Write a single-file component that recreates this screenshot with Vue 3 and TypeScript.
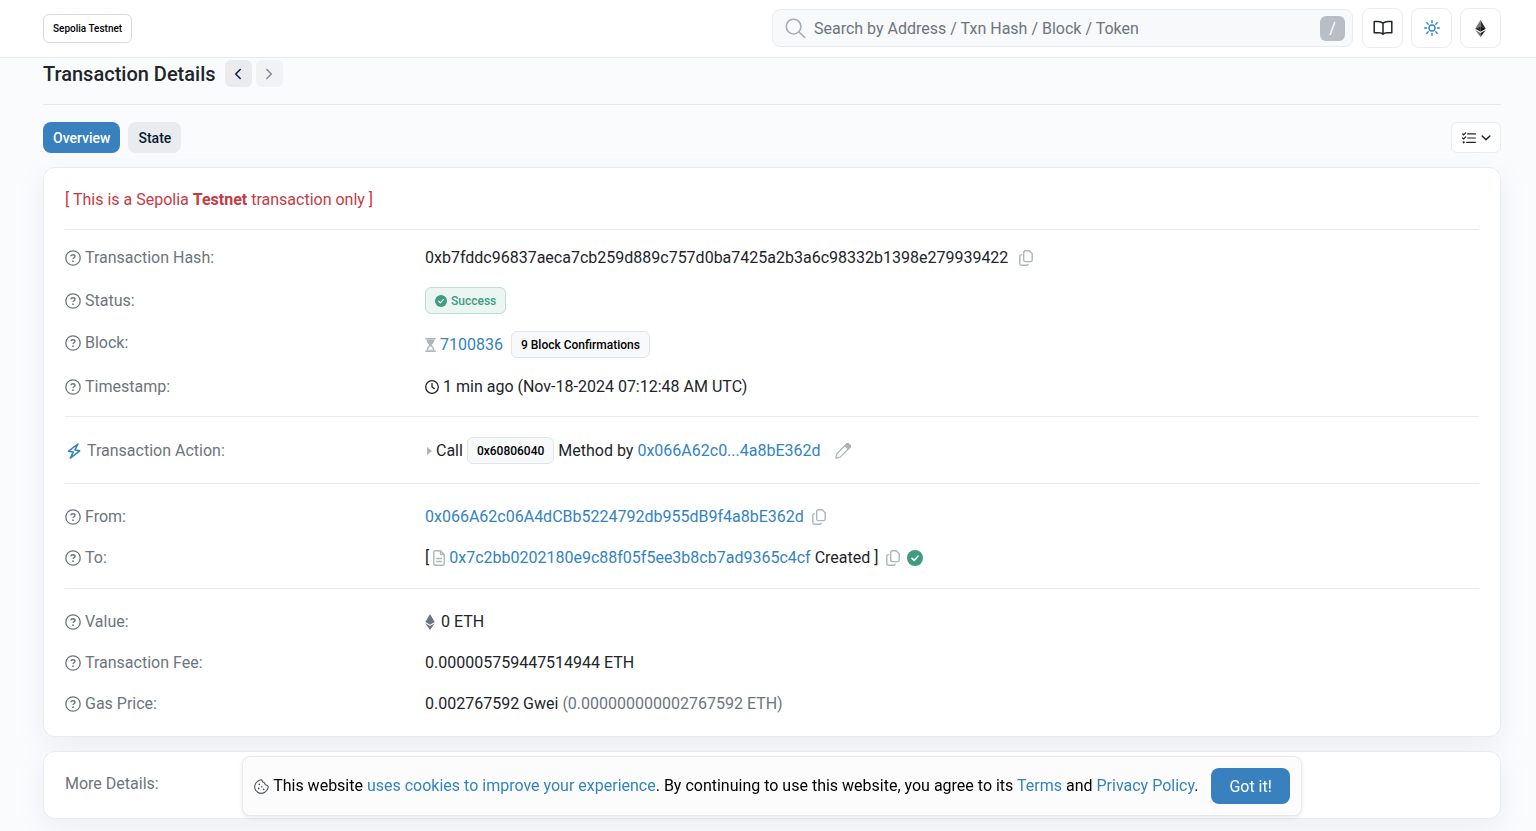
<script setup lang="ts">
import { ref } from 'vue'

const search = ref('')
const cookiesAccepted = ref(false)
const hash = '0xb7fddc96837aeca7cb259d889c757d0ba7425a2b3a6c98332b1398e279939422'
const sender = '0x066A62c06A4dCBb5224792db955dB9f4a8bE362d'
const contract = '0x7c2bb0202180e9c88f05f5ee3b8cb7ad9365c4cf'

function copy(text: string) {
  navigator.clipboard?.writeText(text)
}
</script>

<template>
  <svg class="defs" aria-hidden="true">
    <symbol id="i-help" viewBox="0 0 16 16">
      <circle cx="8" cy="8" r="7.2" fill="none" stroke="currentColor" stroke-width="1.3" />
      <path d="M6 6.3c0-1 .8-1.6 2-1.6s2 .7 2 1.7c0 1.3-2 1.4-2 2.6" fill="none" stroke="currentColor" stroke-width="1.4" />
      <circle cx="8" cy="11.2" r=".9" fill="currentColor" />
    </symbol>
    <symbol id="i-copy" viewBox="0 0 14 16">
      <path d="M6.400.8h3.900l2.900 2.900v6.200c0 1-.7 1.700-1.700 1.700H6.400c-1 0-1.700-.7-1.700-1.700V2.500c0-1 .7-1.700 1.700-1.700z" fill="none" stroke="currentColor" stroke-width="1.4" stroke-linejoin="round" />
      <path d="M2.900 4.600h-.4C1.500 4.600.8 5.300.8 6.300v7.200c0 1 .7 1.700 1.700 1.700h5c1 0 1.700-.6 1.700-1.500" fill="none" stroke="currentColor" stroke-width="1.4" />
    </symbol>
    <symbol id="i-check" viewBox="0 0 16 16">
      <circle cx="8" cy="8" r="8" fill="currentColor" />
      <path d="M4.900 8.200l2.200 2.200 4-4.300" fill="none" stroke="#fff" stroke-width="1.500" stroke-linecap="round" stroke-linejoin="round" />
    </symbol>
  </svg>

  <header class="topbar">
    <button class="network" type="button">Sepolia Testnet</button>
    <form class="search" role="search" @submit.prevent>
      <svg class="search-icon" viewBox="0 0 22 22" fill="none" stroke="currentColor" stroke-width="1.7" stroke-linecap="round">
        <circle cx="9" cy="9" r="7.700" />
        <path d="M14.700 14.700l6 5.700" />
      </svg>
      <input v-model="search" type="text" aria-label="Search" placeholder="Search by Address / Txn Hash / Block / Token" />
      <kbd>/</kbd>
    </form>
    <nav class="tools" aria-label="Tools">
      <button type="button" aria-label="Documentation">
        <svg width="20" height="16" viewBox="0 0 20 16" fill="none" stroke="#212529" stroke-width="1.500" stroke-linejoin="round">
          <path d="M10 3.100C8.500 1.800 6.800 1.400 5 1.400H1.200v11.400H6c1.700 0 3 .4 4 1.500 1-1.100 2.300-1.500 4-1.500h4.800V1.400H15c-1.800 0-3.500.4-5 1.700zM10 3v11" />
        </svg>
      </button>
      <button type="button" aria-label="Theme">
        <svg width="16" height="16" viewBox="0 0 16 16" fill="none" stroke="#3383bf" stroke-width="1.400" stroke-linecap="round">
          <circle cx="8" cy="8" r="3" />
          <path d="M8 .7v2M8 13.300v2M.7 8h2M13.300 8h2M2.800 2.800l1.400 1.400M11.800 11.800l1.400 1.400M2.800 13.200l1.400-1.400M11.800 4.200l1.400-1.400" />
        </svg>
      </button>
      <button type="button" aria-label="Ethereum networks">
        <svg width="11" height="17" viewBox="0 0 11 17">
          <path d="M5.500 0v6.200L.2 8.700z" fill="#777" />
          <path d="M5.500 0v6.200l5.300 2.500z" fill="#303030" />
          <path d="M5.500 6.200v5.600L.2 8.700z" fill="#303030" />
          <path d="M5.500 6.200v5.600l5.300-3.100z" fill="#101010" />
          <path d="M.2 9.900l5.300 3.100V17z" fill="#777" />
          <path d="M10.800 9.900L5.500 13V17z" fill="#222" />
        </svg>
      </button>
    </nav>
  </header>

  <main class="page">
    <div class="heading">
      <h1>Transaction Details</h1>
      <button type="button" aria-label="Previous transaction">
        <svg width="8" height="12" viewBox="0 0 8 12"><path d="M6.200 1.500L1.700 6l4.500 4.500" /></svg>
      </button>
      <button type="button" aria-label="Next transaction" disabled>
        <svg width="8" height="12" viewBox="0 0 8 12"><path d="M1.800 1.500L6.300 6l-4.500 4.500" /></svg>
      </button>
    </div>

    <div class="tabs">
      <button class="tab active" type="button">Overview</button>
      <button class="tab" type="button">State</button>
      <button class="options" type="button" aria-label="View options">
        <svg width="14" height="12" viewBox="0 0 14 12" fill="none" stroke="#212529" stroke-width="1.200" stroke-linecap="round">
          <path d="M5.600 1.900h7.800M5.600 6h7.800M4.600 10.300h8.800M.6 1.800l1.100 1L3.600.8M.6 6l1.100 1 1.900-2" />
          <circle cx="1.700" cy="10.300" r=".5" fill="#212529" />
        </svg>
        <svg width="10" height="6" viewBox="0 0 10 6" fill="none" stroke="#212529" stroke-width="1.500" stroke-linecap="round" stroke-linejoin="round">
          <path d="M1.200 1L5 4.800 8.800 1" />
        </svg>
      </button>
    </div>

    <section class="card">
      <p class="notice">[ This is a Sepolia <strong>Testnet</strong> transaction only ]</p>

      <dl class="group">
        <div class="row">
          <dt><svg class="help"><use href="#i-help" /></svg>Transaction Hash:</dt>
          <dd>{{ hash }}<button class="copy wide" type="button" aria-label="Copy hash" @click="copy(hash)"><svg><use href="#i-copy" /></svg></button></dd>
        </div>
        <div class="row centered">
          <dt><svg class="help"><use href="#i-help" /></svg>Status:</dt>
          <dd><span class="badge success"><svg><use href="#i-check" /></svg>Success</span></dd>
        </div>
        <div class="row">
          <dt><svg class="help"><use href="#i-help" /></svg>Block:</dt>
          <dd>
            <svg class="hourglass" viewBox="0 0 11 14">
              <path d="M.3 0h10.400v1.500H.3zM.3 12.500h10.400V14H.3z" fill="#adb5bd" />
              <path d="M1.600 1.500c0 2.700 1.300 4 2.900 5.500-1.600 1.500-2.900 2.800-2.900 5.500h7.800c0-2.700-1.300-4-2.900-5.500 1.600-1.500 2.900-2.800 2.900-5.500z" fill="#adb5bd" />
              <path d="M3 11.800c.2-1.500 1.200-2.500 2.500-3.500 1.300 1 2.300 2 2.500 3.500z" fill="#fff" />
            </svg>
            <a href="#block">7100836</a><span class="badge confirmations">9 Block Confirmations</span>
          </dd>
        </div>
        <div class="row">
          <dt><svg class="help"><use href="#i-help" /></svg>Timestamp:</dt>
          <dd>
            <svg class="clock" viewBox="0 0 14 14" fill="none" stroke="currentColor" stroke-width="1.300" stroke-linecap="round">
              <circle cx="7" cy="7" r="6.300" />
              <path d="M7 3.500V7l2.300 1.600" />
            </svg>
            1 min ago (Nov-18-2024 07:12:48 AM UTC)
          </dd>
        </div>
      </dl>

      <dl class="group action">
        <div class="row centered">
          <dt>
            <svg class="bolt" viewBox="0 0 14 16" fill="none" stroke="#3383bf" stroke-width="1.500" stroke-linejoin="round">
              <path d="M10.900 1L1.500 8.200l4.700.9-2.900 6 9.400-7.300-4.700-.9z" />
            </svg>
            Transaction Action:
          </dt>
          <dd>
            <svg class="caret" viewBox="0 0 5 8"><path d="M0 0l5 4-5 4z" fill="#adb5bd" /></svg>
            Call <span class="badge method">0x60806040</span> Method by
            <a class="by" href="#address">0x066A62c0...4a8bE362d</a>
            <button class="edit" type="button" aria-label="Edit label">
              <svg viewBox="0 0 16 16" fill="none" stroke="currentColor" stroke-width="1.300" stroke-linejoin="round">
                <path d="M.8 15.200l1.100-4.400L11.700 1c.5-.5 1.300-.5 1.800 0L15 2.500c.5.500.5 1.300 0 1.800L5.200 14.100z" />
                <path d="M10 2.700L13.300 6l1.800-1.800c.4-.5.400-1.200 0-1.700l-1.600-1.600c-.5-.4-1.200-.4-1.700 0z" fill="currentColor" />
              </svg>
            </button>
          </dd>
        </div>
      </dl>

      <dl class="group lower">
        <div class="row">
          <dt><svg class="help"><use href="#i-help" /></svg>From:</dt>
          <dd><a href="#from">{{ sender }}</a><button class="copy" type="button" aria-label="Copy sender" @click="copy(sender)"><svg><use href="#i-copy" /></svg></button></dd>
        </div>
        <div class="row">
          <dt><svg class="help"><use href="#i-help" /></svg>To:</dt>
          <dd>
            [
            <svg class="doc" viewBox="0 0 12 16" fill="none" stroke="#adb5bd" stroke-width="1.400" stroke-linejoin="round">
              <path d="M7.500.8H2.300C1.400.8.8 1.400.8 2.300v11.400c0 .9.600 1.500 1.500 1.500h7.400c.9 0 1.500-.6 1.500-1.500V4.500zM7.500.8v3.700h3.700M3.200 8.500h5.600M3.200 11.500h5.600" />
            </svg>
            <a href="#to">{{ contract }}</a>&nbsp;Created ]
            <button class="copy" type="button" aria-label="Copy contract" @click="copy(contract)"><svg><use href="#i-copy" /></svg></button>
            <svg class="verified"><use href="#i-check" /></svg>
          </dd>
        </div>
      </dl>

      <dl class="group lower">
        <div class="row">
          <dt><svg class="help"><use href="#i-help" /></svg>Value:</dt>
          <dd>
            <svg class="eth" viewBox="0 0 10 16">
              <path d="M5 0l4.700 8L5 10.800.3 8z" fill="#6c757d" />
              <path d="M.3 9.300L5 12l4.700-2.700L5 16z" fill="#6c757d" />
            </svg>
            0 ETH
          </dd>
        </div>
        <div class="row">
          <dt><svg class="help"><use href="#i-help" /></svg>Transaction Fee:</dt>
          <dd>0.000005759447514944 ETH</dd>
        </div>
        <div class="row">
          <dt><svg class="help"><use href="#i-help" /></svg>Gas Price:</dt>
          <dd>0.002767592 Gwei&nbsp;<span class="muted">(0.000000000002767592 ETH)</span></dd>
        </div>
      </dl>
    </section>

    <section class="card more">More Details:</section>
  </main>

  <div v-if="!cookiesAccepted" class="cookie-layer">
    <aside class="cookies" aria-label="Cookie notice">
      <svg class="cookie" viewBox="0 0 16 16" fill="none" stroke="#495057" stroke-width="1.100" stroke-linejoin="round">
        <path d="M8.300.8c.2 2 1.300 3 2.900 3.200.2 1.700 1.200 2.700 3.100 2.900l.9 1.400c0 1.400-.8 2.800-1.600 3.800l-2 2c-1.200.8-2.300 1.200-3.800 1.200-1.300 0-2.900-.5-3.900-1.200l-2-2C1.100 11 .7 9.600.7 8.300c0-1.400.5-2.700 1.200-3.800l1.900-1.900C5 1.500 6.700.8 8.300.8z" />
        <g fill="#495057" stroke="none"><circle cx="5.700" cy="5.700" r=".9" /><circle cx="5" cy="10" r=".9" /><circle cx="8.300" cy="8.300" r=".8" /><circle cx="10.300" cy="11" r=".9" /></g>
      </svg>
      <p>This website <a href="#cookies">uses cookies to improve your experience</a>. By continuing to use this website, you agree to its <a href="#terms">Terms</a> and <a href="#privacy">Privacy Policy</a>.</p>
      <button type="button" @click="cookiesAccepted = true">Got it!</button>
    </aside>
  </div>
</template>

<style>
body {
  margin: 0;
  background: #fafbfd;
  color: #212529;
  font: 16px/24px Roboto, "Liberation Sans", sans-serif;
}
</style>

<style scoped>
* {
  box-sizing: border-box;
}

button,
input,
kbd {
  font-family: inherit;
}

button {
  padding: 0;
  border: 0;
  background: none;
  cursor: pointer;
}

a {
  color: #3383bf;
  text-decoration: none;
}

svg {
  flex: none;
}

.defs {
  position: absolute;
  width: 0;
  height: 0;
}

.topbar {
  display: flex;
  align-items: center;
  gap: 9px;
  height: 58px;
  padding: 0 35px 1px 43px;
  background: #fff;
  border-bottom: 1px solid #e6e8eb;
}

.network {
  height: 29px;
  padding: 0 9px;
  border: 1px solid #d9dbde;
  border-radius: 6px;
  background: #fff;
  color: #000;
  font-size: 10px;
  font-weight: 500;
}

.search {
  display: flex;
  flex: 0 1 581px;
  align-items: center;
  height: 38px;
  margin-left: auto;
  padding: 0 7px 0 12px;
  border: 1px solid #e9ecef;
  border-radius: 8px;
  background: #f8f9fb;
}

.search-icon {
  width: 21px;
  height: 21px;
  color: #a7adb3;
}

.search input {
  flex: 1;
  min-width: 0;
  padding: 0 8px;
  border: 0;
  outline: 0;
  background: none;
  color: #212529;
  font-size: 16px;
}

.search input::placeholder {
  color: #6c757d;
  opacity: 1;
}

.search kbd {
  width: 25px;
  height: 25px;
  border-radius: 6px;
  background: #b8bec4;
  color: #fff;
  font-size: 16px;
  line-height: 25px;
  text-align: center;
}

.tools {
  display: flex;
  gap: 8px;
}

.tools button {
  display: grid;
  place-items: center;
  width: 41px;
  height: 40px;
  border: 1px solid #e9ecef;
  border-radius: 8px;
  background: #fff;
}

.page {
  padding: 0 35px 13px 43px;
}

.heading {
  display: flex;
  align-items: center;
  height: 47px;
  padding-bottom: 15px;
  border-bottom: 1px solid #e6e8eb;
}

.heading h1 {
  margin: 0 9px 0 0;
  font-size: 20px;
  font-weight: 500;
}

.heading button {
  display: grid;
  place-items: center;
  width: 27px;
  height: 27px;
  margin-right: 4px;
  border-radius: 6px;
  background: #e9ebee;
}

.heading button:disabled {
  opacity: .5;
}

.heading path {
  fill: none;
  stroke: #081d35;
  stroke-width: 1.5;
  stroke-linecap: round;
  stroke-linejoin: round;
}

.tabs {
  display: flex;
  gap: 8px;
  padding: 17px 0 14px;
}

.tab {
  height: 31px;
  padding: 0 10px;
  border-radius: 8px;
  background: #e9ebee;
  color: #081d35;
  font-size: 14px;
  font-weight: 500;
}

.tab.active {
  background: #3981be;
  color: #fff;
}

.options {
  display: flex;
  align-items: center;
  gap: 5px;
  height: 31px;
  margin-left: auto;
  padding: 0 9px 0 10px;
  border: 1px solid #e9ecef;
  border-radius: 6px;
  background: #fff;
}

.card {
  padding: 20px 21px;
  border: 1px solid #e9ecef;
  border-radius: 12px;
  background: #fff;
  box-shadow: 0 8px 24px rgba(140, 152, 164, .12);
}

.notice {
  margin: 0;
  padding-bottom: 17px;
  color: #c63a44;
}

.notice strong {
  font-weight: 700;
}

.group {
  display: grid;
  gap: 17px;
  margin: 0;
  padding: 16px 0 17px;
  border-top: 1px solid #e9ecef;
}

.group.action {
  padding: 20px 0 19px;
}

.group.lower {
  padding: 21px 0 18px;
}

.group:last-child {
  padding-bottom: 0;
}

.row {
  display: grid;
  grid-template-columns: 360px 1fr;
  align-items: start;
}

.row.centered {
  align-items: center;
}

dt,
dd {
  display: flex;
  align-items: center;
  margin: 0;
}

dt,
.muted {
  color: #6c757d;
}

.help {
  width: 16px;
  height: 16px;
  margin-right: 4px;
}

.bolt {
  width: 14px;
  height: 16px;
  margin: 0 6px 0 2px;
}

.badge {
  display: flex;
  align-items: center;
  height: 27px;
  padding: 0 9px;
  border: 1px solid #e1e4e8;
  border-radius: 6px;
  background: #f8f9fa;
  color: #000;
  font-size: 12px;
  font-weight: 500;
}

.success {
  border-color: #bcded4;
  background: #ebf5f2;
  color: #3f9c80;
}

.success svg {
  width: 12px;
  height: 12px;
  margin-right: 4px;
}

.confirmations {
  margin-left: 8px;
}

.method {
  margin: 0 4px;
}

.hourglass {
  width: 11px;
  height: 14px;
  margin-right: 4px;
}

.clock {
  width: 14px;
  height: 14px;
  margin-right: 4px;
}

.caret {
  width: 5px;
  height: 8px;
  margin: 0 4px 0 2px;
}

.by {
  margin-left: 4px;
}

.copy,
.edit {
  display: flex;
  margin-left: 8px;
  color: #adb5bd;
}

.copy.wide {
  margin-left: 11px;
}

.copy svg {
  width: 14px;
  height: 16px;
}

.edit {
  margin-left: 14px;
}

.edit svg {
  width: 16px;
  height: 16px;
}

.doc {
  width: 12px;
  height: 16px;
  margin: 0 4px;
}

.verified {
  width: 16px;
  height: 16px;
  margin-left: 7px;
  color: #3f9c80;
}

.eth {
  width: 10px;
  height: 16px;
  margin-right: 6px;
}

.more {
  margin-top: 14px;
  height: 68px;
  color: #6c757d;
}

.cookie-layer {
  position: fixed;
  right: 35px;
  bottom: 15px;
  left: 43px;
  display: flex;
  justify-content: center;
}

.cookies {
  display: flex;
  align-items: center;
  padding: 11px;
  border: 1px solid #e6e8eb;
  border-radius: 8px;
  background: #fcfcfc;
  box-shadow: 0 2px 4px rgba(0, 0, 0, .08);
  color: #000;
}

.cookie {
  width: 15px;
  height: 15px;
  margin-right: 4px;
}

.cookies p {
  margin: 0 13px 0 0;
}

.cookies button {
  height: 36px;
  padding: 0 18px;
  border-radius: 8px;
  background: #3981be;
  color: #fff;
  font-size: 16px;
}
</style>
